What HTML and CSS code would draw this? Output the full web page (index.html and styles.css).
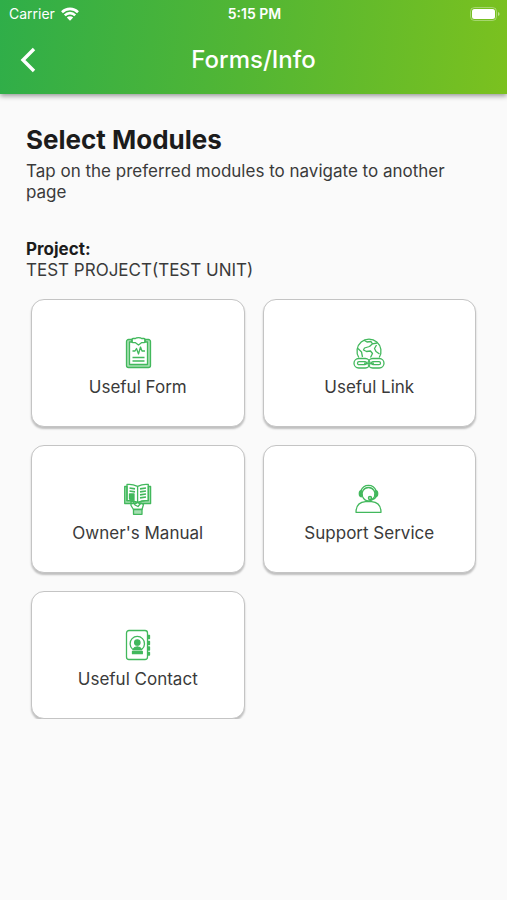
FILE: index.html
```html
<!DOCTYPE html>
<html lang="en">
<head>
<meta charset="utf-8">
<meta name="viewport" content="width=device-width, initial-scale=1">
<title>Forms/Info</title>
<link rel="stylesheet" href="styles.css">
</head>
<body>
<header class="header">
  <div class="status">
    <div class="carrier">
      <span>Carrier</span>
      <svg class="wifi" viewBox="0 0 18 14" aria-hidden="true">
        <path d="M1 5.200a11.400 11.400 0 0 1 16 0M3.800 8.300a7.400 7.400 0 0 1 10.400 0" fill="none" stroke="currentColor" stroke-width="2.600"/>
        <path d="M5.800 10.500a4.600 4.600 0 0 1 6.400 0L9 13.700z" fill="currentColor"/>
      </svg>
    </div>
    <time class="time">5:15 PM</time>
    <svg class="battery" viewBox="0 0 30 14" aria-hidden="true">
      <rect x=".5" y=".5" width="26" height="13" rx="4" fill="none" stroke="currentColor" opacity=".35"/>
      <rect x="2" y="2" width="23" height="10" rx="2.500" fill="currentColor"/>
      <path d="M28 5v4q1.600-.6 1.600-2T28 5z" fill="currentColor" opacity=".5"/>
    </svg>
  </div>
  <nav class="navbar">
    <button class="back" type="button" aria-label="Back">
      <svg viewBox="0 0 16 26" aria-hidden="true"><path d="M14 2 3 13l11 11" fill="none" stroke="currentColor" stroke-width="3.400"/></svg>
    </button>
    <h1 class="title">Forms/Info</h1>
  </nav>
</header>
<main class="content">
  <h2 class="heading">Select Modules</h2>
  <p class="text">Tap on the preferred modules to navigate to another page</p>
  <section class="project">
    <h3 class="label">Project:</h3>
    <p class="text">TEST PROJECT(TEST UNIT)</p>
  </section>
  <div class="modules">
    <button class="card" type="button">
      <svg class="icon" viewBox="0 0 32 32" aria-hidden="true">
        <path class="tint" fill-rule="evenodd" d="M10 2.500H6.500a2 2 0 0 0-2 2v24a2 2 0 0 0 2 2h20a2 2 0 0 0 2-2v-24a2 2 0 0 0-2-2H23V5h2.500v22.500h-18V5H10z"/>
        <path d="M10 2.500q0-1 1-1h2.500q.5-.8 3-.8t3 .8H22q1 0 1 1v2.200q0 1-1 1h-2.500L16.500 8l-3-2.300H11q-1 0-1-1z"/>
        <path d="M10.500 14h2.500l1.500-2.500 2 5.500 2-7 1.500 4h3" />
        <path d="M10.500 20.500h12M10.500 24h12"/>
      </svg>
      <span>Useful Form</span>
    </button>
    <button class="card" type="button">
      <svg class="icon" viewBox="0 0 32 32" aria-hidden="true">
        <path d="M5.800 20.500a12 12 0 1 1 20.400 0"/>
        <path d="M11 3.200l3 1.800 4-.5 1.500 2.300-3 2.700-5 1.500-1 2 3 1.500 4-.5 2 2.500-2 4M19.500 6.800l4.500-.8M23.500 8l-2 3.500 1.500 3 3.500 2.500M5 11.500l3.500 3.500 1 5"/>
        <rect x="1" y="21.500" width="16" height="9.500" rx="4.700"/>
        <rect x="15" y="21.500" width="16" height="9.500" rx="4.700"/>
        <rect x="4.500" y="24.700" width="9" height="3" rx="1.500"/>
        <rect x="18.500" y="24.700" width="9" height="3" rx="1.500"/>
        <path d="M11 26.200h10"/>
      </svg>
      <span>Useful Link</span>
    </button>
    <button class="card" type="button">
      <svg class="icon" viewBox="0 0 32 32" aria-hidden="true">
        <path class="tint" d="M5 3.500H2.700v17H14l1.600-1 1.600 1h11.400v-17h-2.300v14.200q-5.700-.7-10.700 1.800Q11 17 5 17.700z"/>
        <path d="M15.600 3.300Q10 .8 5 1.500v16.200q5.500-.7 10.600 1.800 5.100-2.500 10.700-1.800V1.500Q21 .8 15.600 3.300v16.200"/>
        <path d="M7.500 5l5.500.8M7.500 8l5.500.8M18 5.800l6-.8M18 8.800l6-.8M18 11.800l6-.8M18 14.800l6-.8" stroke-width="1.700"/>
        <path class="solid" d="M7.500 11h4.500v6l-4.500-1z"/>
        <path d="M11.500 26.500 9 22.500v-4l2-.5 2 4 3 1.500 3-3.500 2.500 1.500-1.500 5z"/>
        <path class="tint" d="M11.500 26.500v4.800h8.500v-4.800z"/>
      </svg>
      <span>Owner's Manual</span>
    </button>
    <button class="card" type="button">
      <svg class="icon" viewBox="0 0 32 32" aria-hidden="true">
        <path d="M3 29.300q0-9.800 9.500-10.600h6q9.500.8 9.500 10.600z"/>
        <path d="M9.500 13.500a6.500 6.500 0 1 1 12 0q-2 4.500-6 4.500t-6-4.500z"/>
        <path d="M8 7.500a8 8 0 0 1 15 0"/>
        <path class="solid" d="M8.300 7.500v6.300Q6.300 13.500 6.300 10.700t2-3.200zM22.700 7.500v6.300q2-.3 2-3.100t-2-3.200z"/>
        <path d="M23 13.500q-1 3.200-5 2.500"/>
        <circle class="tint" cx="17" cy="15" r="1.600"/>
      </svg>
      <span>Support Service</span>
    </button>
    <button class="card" type="button">
      <svg class="icon" viewBox="0 0 32 32" aria-hidden="true">
        <rect x="4.500" y="1.500" width="21" height="29" rx="2.500"/>
        <path d="M10.500 20a7.200 7.200 0 1 1 9.600 0"/>
        <circle class="solid" cx="15.300" cy="13.500" r="2.700"/>
        <path class="solid" d="M10.800 20.500q1.700-2.700 4.500-2.700t4.500 2.700zM10.500 22.500h9.800v2.200h-9.800z"/>
        <path class="solid" d="M26 6.500h1.500v3H26zM26 12.500h1.500v3H26zM26 18h1.500v3H26zM26 23.500h1.500v2.500H26z"/>
      </svg>
      <span>Useful Contact</span>
    </button>
  </div>
</main>
</body>
</html>
```
FILE: styles.css
```css
* {
  box-sizing: border-box;
}

body {
  margin: 0;
  min-height: 100vh;
  background: #fafafa;
  color: #3a3a3a;
  font-family: Inter, "Liberation Sans", sans-serif;
  font-size: 17px;
  line-height: 21px;
}

h1, h2, h3, p {
  margin: 0;
}

button {
  padding: 0;
  border: 0;
  background: none;
  color: inherit;
  font: inherit;
  cursor: pointer;
}

.header {
  color: #fff;
  background: linear-gradient(96deg, #2fae49, #52b634 48%, #7bc11f);
  box-shadow: 0 2px 5px rgba(0, 0, 0, 0.4);
}

.status {
  display: grid;
  grid-template-columns: 1fr auto 1fr;
  align-items: center;
  height: 26px;
  padding: 1px 7px 0 9px;
  font-size: 14px;
}

.carrier {
  display: flex;
  align-items: center;
  gap: 6px;
}

.wifi {
  width: 18px;
  height: 14px;
}

.time {
  font-weight: 600;
}

.battery {
  justify-self: end;
  width: 30px;
  height: 14px;
}

.navbar {
  display: grid;
  grid-template-columns: 48px 1fr 48px;
  align-items: center;
  height: 68px;
}

.back {
  display: flex;
  align-items: center;
  height: 48px;
  padding-left: 20px;
}

.back svg {
  width: 16px;
  height: 26px;
}

.title {
  text-align: center;
  font-size: 24px;
  line-height: 32px;
  font-weight: 500;
}

.content {
  padding: 30px 26px;
}

.heading {
  margin-bottom: 5px;
  color: #1c1c1c;
  font-size: 26px;
  line-height: 32px;
  font-weight: 700;
}

.project {
  margin-top: 36px;
}

.label {
  color: #1c1c1c;
  font-size: 17px;
  font-weight: 700;
}

.modules {
  display: grid;
  grid-template-columns: 1fr 1fr;
  gap: 18px;
  padding: 18px 5px 0;
  overflow: hidden;
}

.card {
  display: flex;
  flex-direction: column;
  align-items: center;
  justify-content: center;
  gap: 8px;
  height: 128px;
  padding-top: 8px;
  border: 1px solid #c4c4c4;
  border-radius: 13px;
  background: #fff;
  box-shadow: 0 2px 2px rgba(0, 0, 0, 0.24);
}

.icon {
  width: 32px;
  height: 32px;
  fill: none;
  stroke: #42b85c;
  stroke-width: 1.3;
  stroke-linejoin: round;
}

.icon .solid {
  fill: #42b85c;
}

.icon .tint {
  fill: #a6dfb2;
}
```
